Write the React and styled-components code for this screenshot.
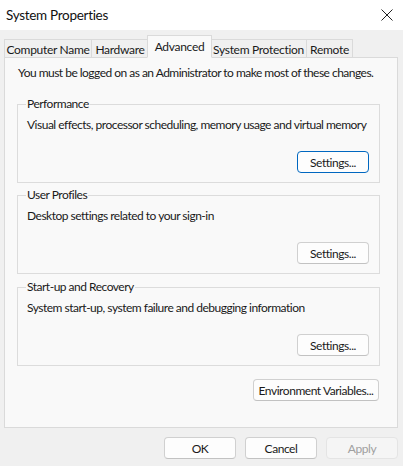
import React from 'react'
import styled, { createGlobalStyle } from 'styled-components'

const Global = createGlobalStyle`
  html, body { margin: 0; padding: 0; }
  body {
    width: 403px;
    height: 466px;
    overflow: hidden;
    background: #f0f0f0;
    font-family: Lato, "Liberation Sans", sans-serif;
    font-size: 12px;
    letter-spacing: -0.5px;
    color: #1a1a1a;
  }
`

const Window = styled.div`
  width: 403px;
  height: 466px;
  display: flex;
  flex-direction: column;
  background: #f0f0f0;
`

const TitleBar = styled.div`
  height: 30px;
  background: #ffffff;
  display: flex;
  align-items: center;
  justify-content: space-between;
  padding: 0 10px 0 6px;
  font-size: 13.5px;
  letter-spacing: -0.3px;
  color: #111;
`

const Close = styled.span`
  display: flex;
  align-items: center;
`

const Body = styled.div`
  padding: 6px 5px 0 4px;
  display: flex;
  flex-direction: column;
`

const TabStrip = styled.div`
  display: flex;
  align-items: flex-end;
  height: 21px;
  padding-left: 1px;
`

const Tab = styled.div`
  width: ${p => p.w}px;
  height: ${p => (p.active ? '23px' : '19px')};
  margin-left: ${p => (p.active ? '-2px' : '-1px')};
  margin-right: ${p => (p.active ? '-1px' : '0')};
  display: flex;
  align-items: center;
  justify-content: center;
  padding-top: ${p => (p.active ? '0' : '1px')};
  white-space: nowrap;
  letter-spacing: -0.3px;
  border: 1px solid #dadada;
  border-bottom: ${p => (p.active ? '1px solid #f9f9f9' : '1px solid #dadada')};
  background: ${p => (p.active ? '#f9f9f9' : '#f0f0f0')};
  position: relative;
  z-index: ${p => (p.active ? 2 : 1)};
  margin-bottom: -1px;
  box-sizing: border-box;
  color: #1a1a1a;
`

const Panel = styled.div`
  height: 371px;
  box-sizing: border-box;
  background: #f9f9f9;
  border: 1px solid #dadada;
  padding: 7px 17px 0 12px;
  display: flex;
  flex-direction: column;
`

const Notice = styled.div`
  height: 16px;
  line-height: 16px;
  white-space: nowrap;
  padding-left: 1px;
  letter-spacing: -0.52px;
`

const Group = styled.fieldset`
  margin: ${p => p.top}px 0 0 0;
  padding: 6px 10px 9px 9px;
  border: 1px solid #dcdcdc;
  border-radius: 0;
  min-width: 0;
  legend {
    padding: 0 1px;
    margin-left: -1px;
    line-height: 14px;
    white-space: nowrap;
  }
`

const GroupBody = styled.div`
  height: 56px;
  display: flex;
  flex-direction: column;
  justify-content: space-between;
`

const Desc = styled.div`
  line-height: 16px;
  white-space: nowrap;
`

const Actions = styled.div`
  display: flex;
  justify-content: flex-end;
`

const Button = styled.button`
  font-family: inherit;
  font-size: 12px;
  letter-spacing: -0.45px;
  height: 22px;
  width: ${p => p.w || 72}px;
  box-sizing: border-box;
  border-radius: 4px;
  background: #fdfdfd;
  color: ${p => (p.disabled ? '#a0a0a0' : '#1a1a1a')};
  border: 1px solid ${p => (p.focused ? '#0067c0' : '#d0d0d0')};
  border-bottom-color: ${p => (p.focused ? '#0067c0' : p.disabled ? '#e2e2e2' : '#c2c2c2')};
  ${p => p.disabled && 'background: #f5f5f5; border-color: #e4e4e4;'}
  white-space: nowrap;
  padding: 0;
  margin: 0;
`

const EnvRow = styled(Actions)`
  margin-top: 13px;
  padding-right: 1px;
`

const Footer = styled.div`
  display: flex;
  justify-content: flex-end;
  gap: 9px;
  padding: 9px 0 0 0;
`

function SettingsGroup({ title, text, top, focused }) {
  return (
    <Group top={top}>
      <legend>{title}</legend>
      <GroupBody>
        <Desc>{text}</Desc>
        <Actions>
          <Button focused={focused}>Settings...</Button>
        </Actions>
      </GroupBody>
    </Group>
  )
}

export default function App() {
  return (
    <Window>
      <Global />
      <TitleBar>
        <span>System Properties</span>
        <Close>
          <svg width="12" height="12" viewBox="0 0 12 12">
            <path d="M0.5 0.5 L11.5 11.5 M11.5 0.5 L0.5 11.5" stroke="#222" strokeWidth="1" />
          </svg>
        </Close>
      </TitleBar>
      <Body>
        <TabStrip>
          <Tab w={88}>Computer Name</Tab>
          <Tab w={58}>Hardware</Tab>
          <Tab active w={65}>Advanced</Tab>
          <Tab w={97}>System Protection</Tab>
          <Tab w={47}>Remote</Tab>
        </TabStrip>
        <Panel>
          <Notice>You must be logged on as an Administrator to make most of these changes.</Notice>
          <SettingsGroup
            top={16}
            focused
            title="Performance"
            text="Visual effects, processor scheduling, memory usage and virtual memory"
          />
          <SettingsGroup top={5} title="User Profiles" text="Desktop settings related to your sign-in" />
          <SettingsGroup
            top={6}
            title="Start-up and Recovery"
            text="System start-up, system failure and debugging information"
          />
          <EnvRow>
            <Button w={126}>Environment Variables...</Button>
          </EnvRow>
        </Panel>
        <Footer>
          <Button>OK</Button>
          <Button>Cancel</Button>
          <Button disabled>Apply</Button>
        </Footer>
      </Body>
    </Window>
  )
}
